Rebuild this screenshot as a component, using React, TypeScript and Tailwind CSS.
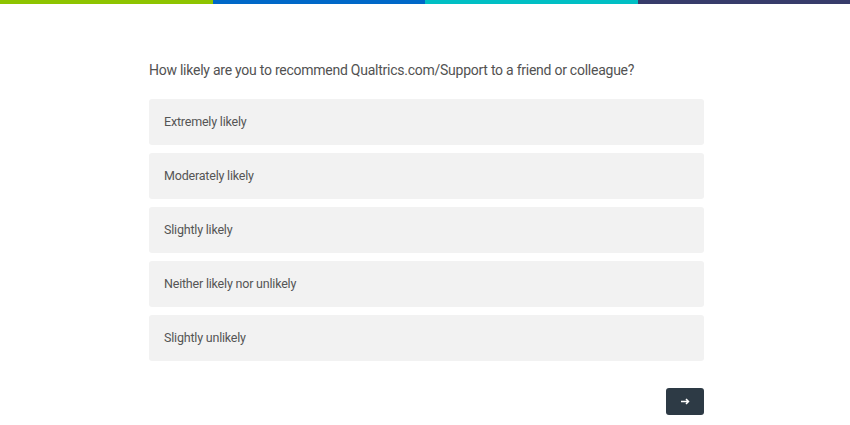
import React, { useState } from 'react';

const choices = [
    'Extremely likely',
    'Moderately likely',
    'Slightly likely',
    'Neither likely nor unlikely',
    'Slightly unlikely',
];

export default function App() {
    const [selected, setSelected] = useState<number | null>(null);

    return (
        <div className="min-h-screen bg-white" style={{ fontFamily: 'Roboto, "Open Sans", sans-serif' }}>
            {/* progress strip */}
            <div className="flex h-1">
                <div className="flex-1 bg-[#8ec400]" />
                <div className="flex-1 bg-[#0068c8]" />
                <div className="flex-1 bg-[#00bfc4]" />
                <div className="flex-1 bg-[#373c6b]" />
            </div>

            <div className="w-[555px] ml-[149px] pt-[56px]">
                <div className="text-[14px] tracking-[-0.25px] text-[#525252] leading-5 mb-[19px]">
                    How likely are you to recommend Qualtrics.com/Support to a friend or colleague?
                </div>

                <div className="flex flex-col gap-2">
                    {choices.map((c, i) => (
                        <button
                            key={c}
                            onClick={() => setSelected(i)}
                            className={`h-[46px] rounded-[3px] px-[15px] text-left text-[12.5px] tracking-[-0.2px] text-[#555] ${selected === i ? 'bg-[#e4e4e4]' : 'bg-[#f2f2f2]'}`}
                        >
                            {c}
                        </button>
                    ))}
                </div>

                <div className="flex justify-end mt-[27px]">
                    <button className="w-[38px] h-[27px] rounded-[3px] bg-[#2d3a45] flex items-center justify-center">
                        <svg width="9" height="7" viewBox="0 0 9 7" fill="none">
                            <path d="M0 3.5h7M5 1l2.5 2.5L5 6" stroke="#fff" strokeWidth="1.5" />
                        </svg>
                    </button>
                </div>
            </div>
        </div>
    );
}
